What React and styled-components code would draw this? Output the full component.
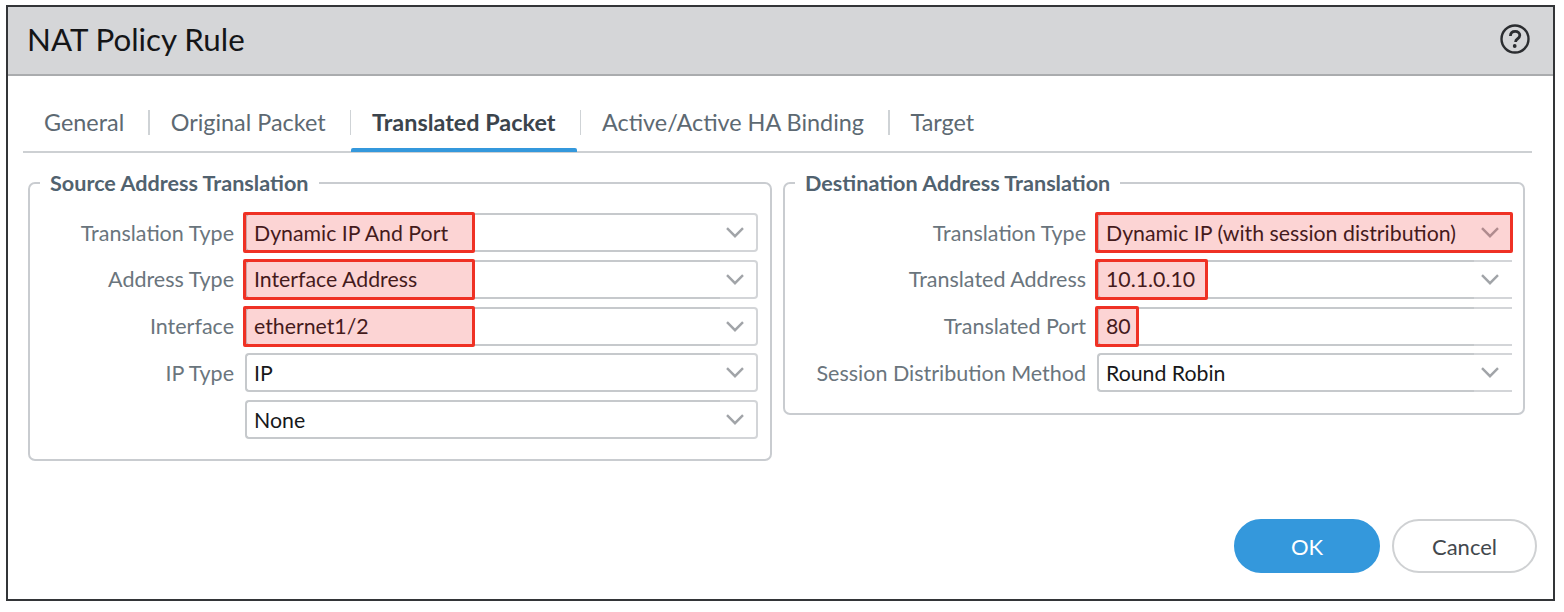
import React from 'react';
import styled, { createGlobalStyle } from 'styled-components';

const GlobalStyle = createGlobalStyle`
  html, body {
    margin: 0;
    padding: 0;
    background: #ffffff;
    font-family: Lato, "Liberation Sans", sans-serif;
  }
`;

const Dialog = styled.div`
  box-sizing: border-box;
  display: flex;
  flex-direction: column;
  width: 1549px;
  height: 596px;
  margin: 5px 0 0 6px;
  border: 2px solid #333538;
  background: #ffffff;
`;

const Header = styled.header`
  box-sizing: border-box;
  display: flex;
  align-items: center;
  justify-content: space-between;
  height: 69px;
  padding: 0 23px 3px 19px;
  background: #d5d6d8;
  border-bottom: 2px solid #aaacae;
`;

const Title = styled.h1`
  margin: 0;
  font-size: 31.3px;
  font-weight: 400;
  color: #141517;
`;

const Body = styled.div`
  display: flex;
  flex: 1;
  flex-direction: column;
  padding: 0 21px 0 15px;
`;

const TabBar = styled.nav`
  display: flex;
  align-items: center;
  height: 75px;
  border-bottom: 2px solid #cdd0d3;
`;

const Tab = styled.div`
  position: relative;
  display: flex;
  align-items: center;
  align-self: stretch;
  padding: 17px 21px 0;
  font-size: 23.4px;
  font-weight: ${(p) => (p.$active ? 700 : 400)};
  color: ${(p) => (p.$active ? '#3b444c' : '#5d6972')};

  ${(p) =>
    p.$active &&
    `
    &::after {
      content: '';
      position: absolute;
      left: 0;
      right: 0;
      bottom: -1px;
      height: 4px;
      border-radius: 2px 2px 0 0;
      background: #3498dc;
    }
  `}
`;

const Divider = styled.span`
  flex: none;
  width: 1.5px;
  height: 25px;
  margin: 17px 0 0 3px;
  background: #cfd3d6;
`;

const Columns = styled.div`
  display: flex;
  align-items: flex-start;
  gap: 11px;
  margin-top: 18px;
  padding-left: 5px;
`;

const Group = styled.fieldset`
  box-sizing: border-box;
  width: ${(p) => p.$width}px;
  height: ${(p) => p.$height}px;
  min-width: 0;
  margin: 0;
  padding: 18px 0 0 0;
  border: 2px solid #c9ccd0;
  border-radius: 7px;
`;

const Legend = styled.legend`
  margin-left: 10px;
  padding: 0 10px;
  font-size: 21.6px;
  line-height: 24px;
  font-weight: 700;
  color: #51626f;
`;

const Rows = styled.div`
  display: flex;
  flex-direction: column;
  gap: 7.75px;
`;

const Row = styled.div`
  display: grid;
  grid-template-columns: ${(p) => p.$labelWidth}px ${(p) => p.$fieldWidth}px;
  column-gap: 11px;
  align-items: center;
`;

const Label = styled.label`
  font-size: 21.5px;
  color: #6a757d;
  text-align: right;
  white-space: nowrap;
`;

const Field = styled.div`
  position: relative;
  display: flex;
  height: 39px;
  font-size: 21.3px;
  color: #17181a;
`;

const Value = styled.div`
  box-sizing: border-box;
  display: flex;
  flex: 1;
  align-items: center;
  padding-left: 7px;
  border: 2px solid #c6c9cc;
  border-right: none;
  border-radius: 4px 0 0 4px;
`;

const Arrow = styled.div`
  box-sizing: border-box;
  display: flex;
  flex: none;
  align-items: center;
  justify-content: center;
  width: 38px;
  padding-right: ${(p) => (p.$open ? 6 : 6)}px;
  border: 2px solid #d3d5d8;
  border-left: none;
  border-right: ${(p) => (p.$open ? 'none' : '2px solid #d3d5d8')};
  border-radius: ${(p) => (p.$open ? 0 : '0 4px 4px 0')};
`;

const Highlight = styled.div`
  box-sizing: border-box;
  position: absolute;
  top: -1px;
  bottom: -1px;
  left: -2px;
  width: ${(p) => p.$width};
  border: 3px solid #ef3124;
  border-radius: 2px;
  background: rgba(240, 40, 40, 0.2);
  pointer-events: none;
`;

const Footer = styled.footer`
  display: flex;
  justify-content: flex-end;
  gap: 12px;
  margin-top: auto;
  margin-right: -5px;
  padding-bottom: 26px;
`;

const Button = styled.button`
  box-sizing: border-box;
  width: ${(p) => (p.$primary ? 146 : 145)}px;
  height: 54px;
  border: 2px solid ${(p) => (p.$primary ? '#3498dc' : '#cfd1d3')};
  border-radius: 27px;
  background: ${(p) => (p.$primary ? '#3498dc' : '#ffffff')};
  font-family: inherit;
  font-size: 22px;
  color: ${(p) => (p.$primary ? '#ffffff' : '#43484d')};
`;

function HelpIcon() {
  return (
    <svg width="30" height="30" viewBox="0 0 30 30" aria-hidden="true">
      <circle cx="15" cy="15" r="13.5" fill="none" stroke="#2b2d30" strokeWidth="2.4" />
      <path
        d="M10.4 12c.2-3 2.2-4.6 4.8-4.6 2.7 0 4.6 1.6 4.6 3.9 0 1.9-1.1 2.8-2.4 3.7-1.2.8-1.8 1.4-1.8 2.9"
        fill="none"
        stroke="#2b2d30"
        strokeWidth="2.8"
      />
      <circle cx="14.7" cy="22" r="1.9" fill="#2b2d30" />
    </svg>
  );
}

function Chevron() {
  return (
    <svg width="18" height="11" viewBox="0 0 18 11" aria-hidden="true">
      <polyline points="1,1.2 9,9.2 17,1.2" fill="none" stroke="#a1a4a8" strokeWidth="2.4" />
    </svg>
  );
}

function FormField({ value, highlight, open, noArrow }) {
  return (
    <Field>
      <Value>{value}</Value>
      <Arrow $open={open}>{!noArrow && <Chevron />}</Arrow>
      {highlight && <Highlight $width={highlight} />}
    </Field>
  );
}

const tabs = [
  { name: 'General' },
  { name: 'Original Packet' },
  { name: 'Translated Packet', active: true },
  { name: 'Active/Active HA Binding' },
  { name: 'Target', last: true },
];

const sourceRows = [
  { label: 'Translation Type', value: 'Dynamic IP And Port', highlight: '232px' },
  { label: 'Address Type', value: 'Interface Address', highlight: '232px' },
  { label: 'Interface', value: 'ethernet1/2', highlight: '232px' },
  { label: 'IP Type', value: 'IP' },
  { label: '', value: 'None' },
];

const destinationRows = [
  {
    label: 'Translation Type',
    value: 'Dynamic IP (with session distribution)',
    highlight: 'calc(100% + 3px)',
  },
  { label: 'Translated Address', value: '10.1.0.10', highlight: '113px' },
  { label: 'Translated Port', value: '80', highlight: '44px', noArrow: true },
  { label: 'Session Distribution Method', value: 'Round Robin' },
];

export default function App() {
  return (
    <>
      <GlobalStyle />
      <Dialog>
        <Header>
          <Title>NAT Policy Rule</Title>
          <HelpIcon />
        </Header>
        <Body>
          <TabBar>
            {tabs.map((tab) => (
              <React.Fragment key={tab.name}>
                <Tab $active={tab.active}>{tab.name}</Tab>
                {!tab.last && <Divider />}
              </React.Fragment>
            ))}
          </TabBar>
          <Columns>
            <Group $width={744} $height={290}>
              <Legend>Source Address Translation</Legend>
              <Rows>
                {sourceRows.map((row) => (
                  <Row key={row.value} $labelWidth={204} $fieldWidth={513}>
                    <Label>{row.label}</Label>
                    <FormField value={row.value} highlight={row.highlight} />
                  </Row>
                ))}
              </Rows>
            </Group>
            <Group $width={742} $height={244}>
              <Legend>Destination Address Translation</Legend>
              <Rows>
                {destinationRows.map((row) => (
                  <Row key={row.value} $labelWidth={301} $fieldWidth={415}>
                    <Label>{row.label}</Label>
                    <FormField
                      value={row.value}
                      highlight={row.highlight}
                      open
                      noArrow={row.noArrow}
                    />
                  </Row>
                ))}
              </Rows>
            </Group>
          </Columns>
          <Footer>
            <Button $primary>OK</Button>
            <Button>Cancel</Button>
          </Footer>
        </Body>
      </Dialog>
    </>
  );
}
